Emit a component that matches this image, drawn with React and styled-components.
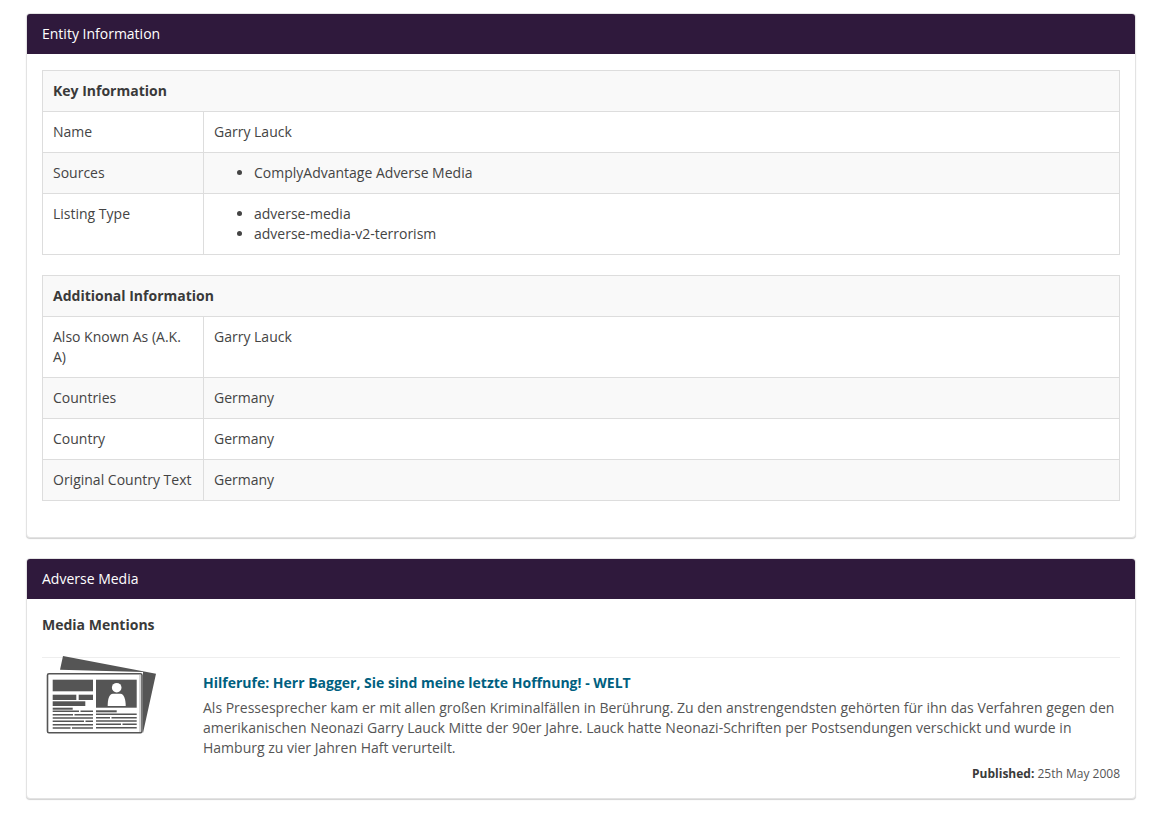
import React from "react";
import styled, { createGlobalStyle } from "styled-components";

const GlobalStyle = createGlobalStyle`
  html, body {
    margin: 0;
    padding: 0;
    background: #fff;
  }
  body {
    font-family: "Open Sans", "Liberation Sans", sans-serif;
    font-size: 14px;
    line-height: 20px;
    color: #444;
  }
  * {
    box-sizing: border-box;
  }
`;

const keyInfo = [
  { label: "Name", value: "Garry Lauck" },
  { label: "Sources", list: ["ComplyAdvantage Adverse Media"] },
  { label: "Listing Type", list: ["adverse-media", "adverse-media-v2-terrorism"] },
];

const additionalInfo = [
  { label: "Also Known As (A.K.A)", value: "Garry Lauck" },
  { label: "Countries", value: "Germany" },
  { label: "Country", value: "Germany" },
  { label: "Original Country Text", value: "Germany" },
];

const InfoTable = ({ title, rows }) => (
  <Table>
    <colgroup>
      <col width="161" />
      <col />
    </colgroup>
    <tbody>
      <tr>
        <HeadCell colSpan="2">{title}</HeadCell>
      </tr>
      {rows.map((row) => (
        <tr key={row.label}>
          <LabelCell>{row.label}</LabelCell>
          <Cell>
            {row.list ? (
              <List>
                {row.list.map((item) => (
                  <li key={item}>{item}</li>
                ))}
              </List>
            ) : (
              row.value
            )}
          </Cell>
        </tr>
      ))}
    </tbody>
  </Table>
);

const NewspaperIcon = () => (
  <IconSvg width="112" height="82" viewBox="0 0 112 82" aria-hidden="true">
    <path d="M17 1 L110 18.7 L97 78 L97 17 L14 14.7 Z" fill="#555" />
    <rect x="1.5" y="18.7" width="94.5" height="59" rx="1.5" fill="#fff" stroke="#555" strokeWidth="1.6" />
    <path d="M94 20 V77" stroke="#aaa" strokeWidth="1" />
    <g fill="#555">
      <rect x="6.7" y="24.7" width="40.3" height="11.6" />
      <rect x="6.7" y="39.7" width="23.6" height="5.3" />
      <rect x="32.7" y="39.7" width="14.3" height="5.3" />
      <rect x="6.7" y="46.3" width="32.6" height="4.7" />
      <rect x="6.7" y="52.7" width="20" height="2" />
      <rect x="50" y="24.7" width="40.7" height="28" />
      <rect x="50" y="55.3" width="20.7" height="2" />
    </g>
    <circle cx="70.7" cy="32.7" r="4.8" fill="#fff" />
    <path d="M61.7 51 C61.7 44 63 39 67 38.7 H74.5 C78 39 79.7 44 79.7 51 Z" fill="#fff" />
    <path
      d="M6.7 56.3 H33 M34.5 56.3 H47 M6.7 59.7 H27 M28.5 59.7 H47 M6.7 63 H47 M6.7 66.3 H38 M39.5 66.3 H47 M6.7 69.7 H47 M6.7 73 H24.5 M26 73 H47"
      stroke="#555"
      strokeWidth="1.4"
    />
    <path
      d="M50 59.3 H90.7 M50 62.7 H64 M65.5 62.7 H90.7 M50 66 H90.7 M50 69.3 H75 M76.5 69.3 H90.7 M50 72.7 H90.7"
      stroke="#555"
      strokeWidth="1.4"
    />
  </IconSvg>
);

export default function App() {
  return (
    <>
      <GlobalStyle />
      <Page>
        <Panel>
          <PanelHeading>Entity Information</PanelHeading>
          <EntityBody>
            <InfoTable title="Key Information" rows={keyInfo} />
            <InfoTable title="Additional Information" rows={additionalInfo} />
          </EntityBody>
        </Panel>

        <Panel>
          <PanelHeading>Adverse Media</PanelHeading>
          <MediaBody>
            <SectionTitle>Media Mentions</SectionTitle>
            <Mention>
              <Thumb>
                <NewspaperIcon />
              </Thumb>
              <MentionText>
                <MentionTitle href="#">
                  Hilferufe: Herr Bagger, Sie sind meine letzte Hoffnung! - WELT
                </MentionTitle>
                <Snippet>
                  Als Pressesprecher kam er mit allen großen Kriminalfällen in Berührung. Zu den
                  anstrengendsten gehörten für ihn das Verfahren gegen den amerikanischen Neonazi
                  Garry Lauck Mitte der 90er Jahre. Lauck hatte Neonazi-Schriften per Postsendungen
                  verschickt und wurde in Hamburg zu vier Jahren Haft verurteilt.
                </Snippet>
                <Published>
                  <b>Published:</b> 25th May 2008
                </Published>
              </MentionText>
            </Mention>
          </MediaBody>
        </Panel>
      </Page>
    </>
  );
}

// STYLES

const Page = styled.div`
  display: flex;
  flex-direction: column;
  gap: 20px;
  padding: 13px 22px 15px 26px;
`;

const Panel = styled.section`
  background: #fff;
  border: 1px solid #e3e3e3;
  border-radius: 4px;
  box-shadow: 0 1px 1px rgba(0, 0, 0, 0.18);
`;

const PanelHeading = styled.div`
  height: 40px;
  padding: 10px 15px;
  background: #2f193c;
  color: #fff;
  border-radius: 3px 3px 0 0;
`;

const EntityBody = styled.div`
  padding: 16px 15px 16px;
`;

const Table = styled.table`
  width: 100%;
  margin-bottom: 20px;
  border-collapse: collapse;
  table-layout: fixed;

  tr:nth-child(odd) {
    background: #f9f9f9;
  }
`;

const HeadCell = styled.th`
  padding: 10px;
  border: 1px solid #ddd;
  color: #3a3a3a;
  font-weight: 700;
  text-align: left;
`;

const Cell = styled.td`
  padding: 10px;
  border: 1px solid #ddd;
  vertical-align: top;
`;

const LabelCell = styled(Cell)`
  word-break: break-all;
`;

const List = styled.ul`
  margin: 0;
  padding-left: 40px;
`;

const MediaBody = styled.div`
  padding: 16px 15px 14px;
`;

const SectionTitle = styled.div`
  font-weight: 700;
  color: #3a3a3a;
  padding-bottom: 22px;
  border-bottom: 1px solid #eee;
`;

const Mention = styled.div`
  display: flex;
`;

const Thumb = styled.div`
  flex: 0 0 161px;
  height: 80px;
  padding-left: 4px;
  margin-top: -3px;
`;

const IconSvg = styled.svg`
  display: block;
`;

const MentionText = styled.div`
  flex: 1;
  padding-top: 15px;
`;

const MentionTitle = styled.a`
  display: block;
  font-weight: 700;
  color: #005f80;
  text-decoration: none;
`;

const Snippet = styled.p`
  margin: 5px 0 0;
  color: #555;
`;

const Published = styled.div`
  margin-top: 6px;
  font-size: 12px;
  text-align: right;
  color: #555;

  b {
    color: #3a3a3a;
  }
`;
